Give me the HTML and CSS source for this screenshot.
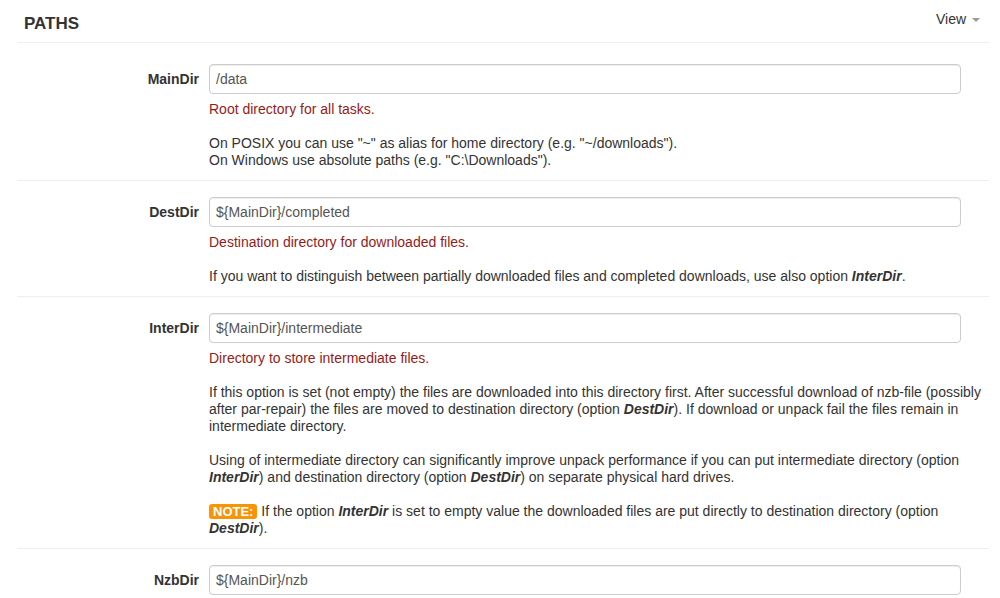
FILE: index.html
```html
<!DOCTYPE html>
<html lang="en">
<head>
    <meta charset="UTF-8">
    <title>Settings - Paths</title>
    <link rel="stylesheet" href="styles.css">
</head>
<body>
    <div class="section">
        <div class="section-header">
            <h2>PATHS</h2>
            <span class="view-menu">View <span class="caret"></span></span>
        </div>

        <div class="option">
            <label class="option-name">MainDir</label>
            <div class="option-body">
                <input type="text" value="/data">
                <p class="help-short">Root directory for all tasks.</p>
                <p>On POSIX you can use "~" as alias for home directory (e.g. "~/downloads").<br>
                On Windows use absolute paths (e.g. "C:\Downloads").</p>
            </div>
        </div>

        <div class="option">
            <label class="option-name">DestDir</label>
            <div class="option-body">
                <input type="text" value="${MainDir}/completed">
                <p class="help-short">Destination directory for downloaded files.</p>
                <p>If you want to distinguish between partially downloaded files and completed downloads, use also option <em>InterDir</em>.</p>
            </div>
        </div>

        <div class="option">
            <label class="option-name">InterDir</label>
            <div class="option-body">
                <input type="text" value="${MainDir}/intermediate">
                <p class="help-short">Directory to store intermediate files.</p>
                <p>If this option is set (not empty) the files are downloaded into this directory first. After successful download of nzb-file (possibly after par-repair) the files are moved to destination directory (option <em>DestDir</em>). If download or unpack fail the files remain in intermediate directory.</p>
                <p>Using of intermediate directory can significantly improve unpack performance if you can put intermediate directory (option <em>InterDir</em>) and destination directory (option <em>DestDir</em>) on separate physical hard drives.</p>
                <p><span class="label-note">NOTE:</span> If the option <em>InterDir</em> is set to empty value the downloaded files are put directly to destination directory (option <em>DestDir</em>).</p>
            </div>
        </div>

        <div class="option">
            <label class="option-name">NzbDir</label>
            <div class="option-body">
                <input type="text" value="${MainDir}/nzb">
            </div>
        </div>
    </div>
</body>
</html>
```

FILE: styles.css
```css
body {
    font-family: "Liberation Sans", Arial, sans-serif;
    font-size: 14px;
    line-height: 17px;
    color: #333;
    margin: 0;
    background-color: #fff;
}
.section {
    margin-left: 17px;
    width: 972px;
}
.section-header {
    display: flex;
    justify-content: space-between;
    height: 42px;
    border-bottom: 1px solid #eee;
}
.section-header h2 {
    margin: 0;
    padding: 14px 0 0 7px;
    font-size: 17px;
    line-height: 20px;
    font-weight: bold;
    color: #333;
}
.view-menu {
    padding: 11px 9px 0 0;
    color: #333;
}
.caret {
    display: inline-block;
    width: 0;
    height: 0;
    margin-left: 2px;
    vertical-align: middle;
    border-top: 4px solid #999;
    border-left: 4px solid transparent;
    border-right: 4px solid transparent;
}
.option {
    display: flex;
    padding: 16px 0 11px;
    border-bottom: 1px solid #eee;
}
.section-header + .option {
    padding-top: 21px;
}
.option:last-child {
    border-bottom: none;
}
.option-name {
    width: 182px;
    flex-shrink: 0;
    text-align: right;
    font-weight: bold;
    padding-top: 7px;
}
.option-body {
    flex: 1;
    margin-left: 10px;
}
.option-body input {
    display: block;
    box-sizing: border-box;
    width: 752px;
    height: 30px;
    padding: 4px 6px;
    font-family: inherit;
    font-size: 14px;
    color: #555;
    border: 1px solid #ccc;
    border-radius: 4px;
    box-shadow: inset 0 1px 1px rgba(0,0,0,0.075);
}
.option-body p {
    margin: 17px 0 0;
}
.option-body p.help-short {
    margin-top: 7px;
    color: #951b1b;
}
.option-body em {
    font-weight: bold;
}
.label-note {
    display: inline-block;
    padding: 0 4px;
    font-size: 13px;
    line-height: 15px;
    font-weight: bold;
    color: #fff;
    background-color: #f89406;
    border-radius: 3px;
}
```
